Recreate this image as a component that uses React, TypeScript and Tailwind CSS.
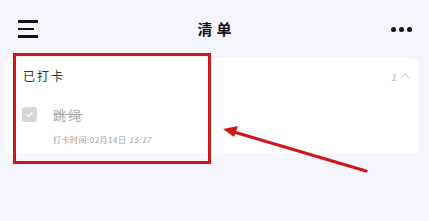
import { ChevronUp } from "lucide-react";

export default function App() {
  return (
    <div
      className="relative w-[429px] h-[221px] overflow-hidden bg-[#f5f6fd]"
      style={{ fontFamily: '"Noto Sans CJK SC", "Noto Sans", sans-serif' }}
    >
      {/* Header */}
      <header className="flex items-center justify-between h-[58px] pl-[18px] pr-[17px]">
        <div className="flex flex-col gap-[5px] w-[20px]">
          <span className="block h-[2.5px] w-[20px] bg-[#111]" />
          <span className="block h-[2.5px] w-[16px] bg-[#111]" />
          <span className="block h-[2.5px] w-[20px] bg-[#111]" />
        </div>
        <h1 className="text-[15px] font-bold text-[#111] tracking-[4px] pl-[4px]">清单</h1>
        <div className="flex items-center gap-[3px]">
          <span className="block w-[5px] h-[5px] rounded-full bg-[#111]" />
          <span className="block w-[5px] h-[5px] rounded-full bg-[#111]" />
          <span className="block w-[5px] h-[5px] rounded-full bg-[#111]" />
        </div>
      </header>

      {/* Card */}
      <section className="mx-[5px] mr-[10px] h-[96px] rounded-lg bg-white">
        <div className="flex items-center justify-between h-9 pl-[18px] pr-[6px]">
          <span className="text-[12px] text-[#333] tracking-[2px]">已打卡</span>
          <div className="flex items-center gap-[1px] text-[#bbb]">
            <span className="text-[10px] italic">1</span>
            <ChevronUp size={16} strokeWidth={1.2} />
          </div>
        </div>
        <div className="flex pl-[17px] mt-[13px]">
          <div className="flex items-center justify-center w-[15px] h-[15px] rounded-[3px] bg-[#d6d6d6]">
            <svg width="9" height="9" viewBox="0 0 10 10" fill="none">
              <path d="M2 5.2L4.2 7.2L8 3" stroke="#fff" strokeWidth="1.4" strokeLinecap="round" strokeLinejoin="round" />
            </svg>
          </div>
          <div className="flex flex-col ml-[16px]">
            <span className="h-[16px] leading-[16px] text-[13px] text-[#aaa] line-through tracking-[2px]">跳绳</span>
            <span className="mt-[11px] h-[12px] leading-[12px] text-[8px] text-[#999] tracking-[0.5px]">
              打卡时间:02月14日 <span className="italic">15:17</span>
            </span>
          </div>
        </div>
      </section>

      {/* Annotation box */}
      <div className="absolute left-[13px] top-[53px] w-[198px] h-[111px] border-[3px] border-[#d0161b]" />

      {/* Annotation arrow */}
      <svg className="absolute left-0 top-0" width="429" height="221" viewBox="0 0 429 221">
        <line x1="366" y1="171" x2="234" y2="132" stroke="#d0161b" strokeWidth="3" strokeLinecap="round" />
        <polygon points="223,129 238,126 234,137" fill="#d0161b" />
      </svg>
    </div>
  );
}
